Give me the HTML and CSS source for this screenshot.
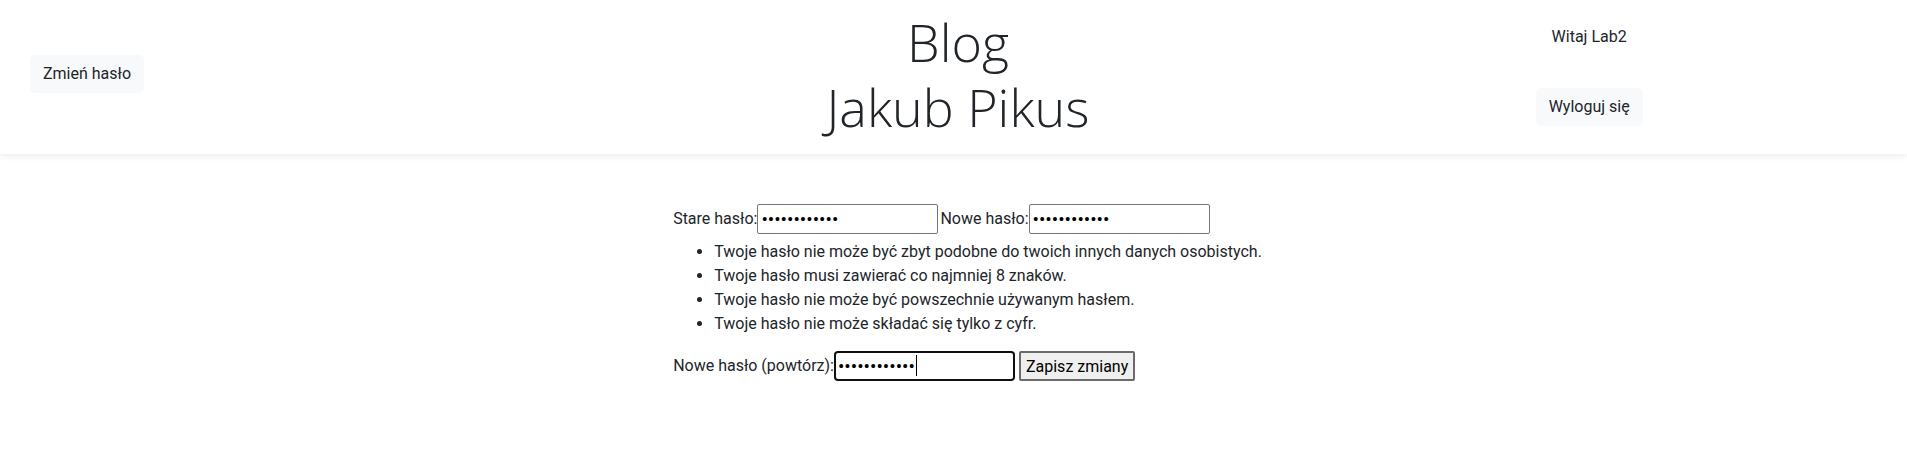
FILE: index.html
```html
<!DOCTYPE html>
<html lang="pl">
<head>
<meta charset="utf-8">
<title>Blog Jakub Pikus</title>
<link rel="stylesheet" href="styles.css">
</head>
<body>
<header class="site-header">
  <div class="hdr-left">
    <a class="btn btn-light" href="#">Zmień hasło</a>
  </div>
  <div class="hdr-center">
    <h1 class="site-title">Blog<br>Jakub Pikus</h1>
  </div>
  <div class="hdr-right">
    <span class="greeting">Witaj Lab2</span>
    <a class="btn btn-light" href="#">Wyloguj się</a>
  </div>
</header>
<main class="content">
  <form class="pw-form">
    <div class="form-row">
      <label for="old">Stare hasło:</label><input id="old" class="pw-input" type="password" value="abcdefghijkl">
      <label for="new1" class="gap-label">Nowe hasło:</label><input id="new1" class="pw-input" type="password" value="abcdefghijkl">
    </div>
    <ul class="help-list">
      <li>Twoje hasło nie może być zbyt podobne do twoich innych danych osobistych.</li>
      <li>Twoje hasło musi zawierać co najmniej 8 znaków.</li>
      <li>Twoje hasło nie może być powszechnie używanym hasłem.</li>
      <li>Twoje hasło nie może składać się tylko z cyfr.</li>
    </ul>
    <div class="form-row">
      <label for="new2">Nowe hasło (powtórz):</label><span class="field"><input id="new2" class="pw-input is-focused" type="password" value="abcdefghijkl"><span class="caret"></span></span>
      <button type="submit" class="submit-btn">Zapisz zmiany</button>
    </div>
  </form>
</main>
</body>
</html>
```
FILE: styles.css
```css
* { box-sizing: border-box; }

body {
  margin: 0;
  font-family: Roboto, "Liberation Sans", sans-serif;
  font-size: 16px;
  line-height: 1.5;
  color: #212529;
  background: #fff;
}

.site-header {
  display: grid;
  grid-template-columns: 1fr 1fr 1fr;
  align-items: center;
  height: 154px;
  padding: 9px 0 15px;
  box-shadow: 0 2px 7px rgba(0, 0, 0, 0.08);
}

.hdr-left { padding-left: 30px; }

.hdr-center { text-align: center; padding-left: 9px; }

.site-title {
  margin: 0;
  font-family: "Open Sans", "Noto Sans", sans-serif;
  font-weight: 300;
  font-size: 52px;
  line-height: 65px;
  color: #212529;
}

.hdr-right {
  align-self: start;
  display: flex;
  flex-direction: column;
  align-items: center;
  gap: 39px;
  padding-top: 16px;
}

.btn {
  display: inline-block;
  padding: 6px 12px;
  font-size: 16px;
  line-height: 24px;
  border-radius: 5px;
  text-decoration: none;
}

.btn-light {
  color: #212529;
  background: #f8f9fa;
  border: 1px solid #f8f9fa;
}

.content {
  display: flex;
  justify-content: center;
  padding: 50px 0 0 28px;
}

.form-row {
  display: flex;
  align-items: center;
  height: 30px;
}

.gap-label { margin-left: 2px; }

.pw-input {
  width: 181px;
  height: 30px;
  padding: 1px 3px;
  border: 1px solid #767676;
  border-radius: 2px;
  background: #fff;
  color: #000;
  font-family: Roboto, sans-serif;
  font-size: 19px;
  letter-spacing: 0;
}

.pw-input.is-focused {
  border: 2px solid #101010;
  border-radius: 4px;
  padding: 1px 2px;
}

.field { position: relative; display: flex; }

.caret {
  position: absolute;
  left: 82px;
  top: 4px;
  width: 1px;
  height: 21px;
  background: #000;
}

.help-list {
  margin: 6px 0 15px;
  padding-left: 41px;
}

.submit-btn {
  margin-left: 4px;
  height: 30px;
  padding: 0 5px;
  font-family: Roboto, sans-serif;
  font-size: 16px;
  color: #000;
  background: #efefef;
  border: 2px solid #6b6b6b;
  border-radius: 2px;
}
```
